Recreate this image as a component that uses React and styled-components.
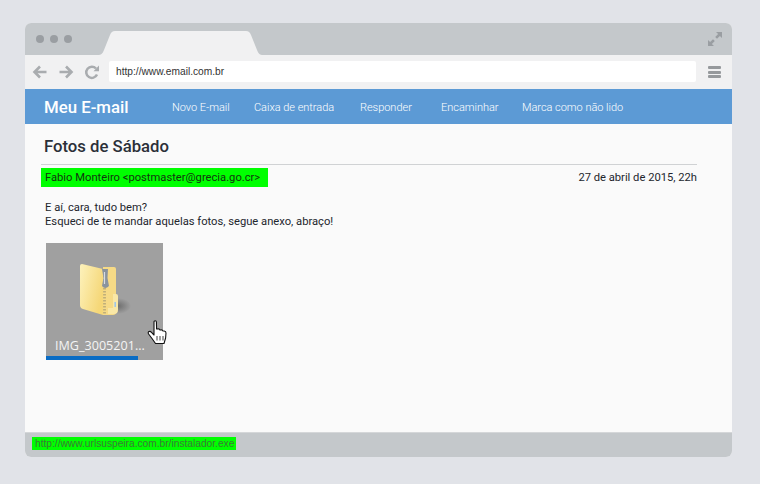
import React from "react";
import styled, { createGlobalStyle } from "styled-components";

const Global = createGlobalStyle`
  html, body { margin: 0; padding: 0; background: #e1e3e8; }
  body { width: 760px; height: 484px; overflow: hidden; font-family: Roboto, sans-serif; }
`;
const Page = styled.div`
  width: 760px; height: 484px; box-sizing: border-box; padding: 23px 28px 27px 25px;
  display: flex;
`;
const Browser = styled.div`
  flex: 1; display: flex; flex-direction: column; border-radius: 6px; overflow: hidden; background: #fafafa;
`;
const TitleBar = styled.div`
  height: 32px; flex: none; background: #c4c8cb; display: flex; align-items: flex-end;
  padding-left: 11px; padding-right: 10px; box-sizing: border-box;
`;
const Dots = styled.div`
  display: flex; gap: 6px; align-self: center; width: 62px;
`;
const Dot = styled.span`
  width: 8px; height: 8px; border-radius: 50%; background: #9a9ea2;
`;
const TabShape = styled.svg`
  width: 165px; height: 24px; display: block; flex: none;
`;
const Spacer = styled.div`flex: 1;`;
const Expand = styled.svg`
  width: 14px; height: 14px; align-self: center; flex: none;
`;
const Toolbar = styled.div`
  height: 34px; flex: none; background: #f1f1f2; display: flex; align-items: center; box-sizing: border-box;
  padding: 0 11px 0 7px;
`;
const NavIcon = styled.svg`
  width: 16px; height: 16px; flex: none; margin-right: ${p => p.$gap}px;
`;
const Url = styled.div`
  flex: 1; height: 21px; background: #fff; border-radius: 2px; display: flex; align-items: center;
  padding-left: 7px; font-family: "Liberation Sans", Arial, sans-serif; font-size: 10.2px; color: #333; margin-right: 12px;
  margin-top: -1px;
`;
const Menu = styled.div`
  width: 13px; display: flex; flex-direction: column; gap: 1.5px; flex: none;
`;
const MenuBar = styled.span`
  height: 3px; background: #96999c; border-radius: 1px;
`;
const Nav = styled.nav`
  height: 35px; flex: none; background: #5c9ad5; display: flex; align-items: center; box-sizing: border-box;
  padding-left: 19px; color: #fff;
`;
const Brand = styled.div`
  font-size: 16.8px; font-weight: 500; width: 128px; flex: none;
`;
const NavLink = styled.a`
  font-size: 11px; font-weight: 300; letter-spacing: -0.03px; color: #fff; flex: none; width: ${p => p.$w}px;
  padding-top: 1px;
`;
const Content = styled.main`
  flex: 1; box-sizing: border-box; padding: 12px 35px 0 16px; display: flex; flex-direction: column; min-height: 0;
`;
const Subject = styled.h1`
  margin: 0 0 7px 3px; font-size: 16.7px; line-height: 21px; font-weight: 500; color: #2b2f38;
`;
const Meta = styled.div`
  border-top: 1px solid #d0d2d4; display: flex; justify-content: space-between; align-items: center;
  padding-top: 3px; font-size: 11.2px; color: #23262d;
`;
const Sender = styled.span`
  background: #0f0; padding: 0 8px 0 4px; height: 19px; line-height: 19px; color: #14340f;
`;
const Body = styled.p`
  margin: 14px 0 0 4px; font-size: 11.2px; line-height: 14px; color: #23262d;
`;
const Attachment = styled.div`
  margin: 14px 0 0 5px; width: 117px; height: 117px; background: #a0a0a0; position: relative; flex: none;
`;
const Folder = styled.svg`
  position: absolute; left: 32px; top: 21px; width: 54px; height: 54px;
`;
const FileName = styled.div`
  position: absolute; left: 9px; top: 95px; font-family: "Open Sans", sans-serif; font-size: 12.6px; line-height: 15px;
  color: #f4f4f4; white-space: nowrap;
`;
const Progress = styled.div`
  position: absolute; left: 0; bottom: 0; height: 4px; background: #0a6cc4;
`;
const Hand = styled.svg`
  position: absolute; left: 101px; top: 77px; width: 22px; height: 25px;
`;
const Footer = styled.footer`
  height: 25px; flex: none; background: #c4c8cb; border-top: 1px solid #d5d7d9; box-sizing: border-box;
  display: flex; align-items: flex-start; padding: 4px 0 0 7px;
`;
const Status = styled.span`
  background: #0f0; color: #3c7a36; font-family: "Liberation Sans", Arial, sans-serif; font-size: 10.2px;
  line-height: 13px; height: 13px; padding: 0 2px 0 3px;
`;

const navItems = [
  ["Novo E-mail", 82],
  ["Caixa de entrada", 106],
  ["Responder", 81],
  ["Encaminhar", 81],
  ["Marca como não lido", 120],
];

export default function App() {
  return (
    <Page>
      <Global />
      <Browser>
        <TitleBar>
          <Dots><Dot /><Dot /><Dot /></Dots>
          <TabShape viewBox="0 0 165 24">
            <path d="M0 24 C3 24 4.5 23 6 19 L12 4 C13 1.5 14.5 0 17 0 L148 0 C150.5 0 152 1.5 153 4 L159 19 C160.5 23 162 24 165 24 Z" fill="#f1f1f2" />
          </TabShape>
          <Spacer />
          <Expand viewBox="0 0 14 14">
            <path d="M8 0 H14 V6 L11.9 3.9 L9 6.8 L7.2 5 L10.1 2.1 Z M0 8 L2.1 10.1 L5 7.2 L6.8 9 L3.9 11.9 L6 14 H0 Z" fill="#9a9ea2" />
          </Expand>
        </TitleBar>
        <Toolbar>
          <NavIcon $gap={10} viewBox="0 0 16 16">
            <path d="M14.5 8 H3 M8 2.5 L2.5 8 L8 13.5" fill="none" stroke="#a9acaf" strokeWidth="2.6" />
          </NavIcon>
          <NavIcon $gap={10} viewBox="0 0 16 16">
            <path d="M1.5 8 H13 M8 2.5 L13.5 8 L8 13.5" fill="none" stroke="#a9acaf" strokeWidth="2.6" />
          </NavIcon>
          <NavIcon $gap={9} viewBox="0 0 16 16">
            <path d="M13 10.5 A5.6 5.6 0 1 1 12 4.5" fill="none" stroke="#a9acaf" strokeWidth="2.5" />
            <path d="M9.5 7.2 H15 V1.6 Z" fill="#a9acaf" />
          </NavIcon>
          <Url>http://www.email.com.br</Url>
          <Menu><MenuBar /><MenuBar /><MenuBar /></Menu>
        </Toolbar>
        <Nav>
          <Brand>Meu E-mail</Brand>
          {navItems.map(([t, w]) => <NavLink key={t} $w={w}>{t}</NavLink>)}
        </Nav>
        <Content>
          <Subject>Fotos de Sábado</Subject>
          <Meta>
            <Sender>Fabio Monteiro &lt;postmaster@grecia.go.cr&gt;</Sender>
            <span>27 de abril de 2015, 22h</span>
          </Meta>
          <Body>E aí, cara, tudo bem?<br />Esqueci de te mandar aquelas fotos, segue anexo, abraço!</Body>
          <Attachment>
            <Folder viewBox="0 0 54 54">
              <defs>
                <linearGradient id="fold" x1="0" y1="0" x2="1" y2="0.5">
                  <stop offset="0" stopColor="#fdf2bc" />
                  <stop offset="1" stopColor="#f5d778" />
                </linearGradient>
                <radialGradient id="shade">
                  <stop offset="0" stopColor="#6e6e6e" />
                  <stop offset="1" stopColor="#a0a0a0" />
                </radialGradient>
              </defs>
              <ellipse cx="40" cy="42" rx="13" ry="8" fill="url(#shade)" />
              <path d="M4 0 L25 5 L25 51 L5 45 Q2 44 2 41 V2 Q2 0 4 0 Z" fill="url(#fold)" />
              <path d="M25 3 H36 Q38 3 38 5 V48 Q38 51 35 51 H25 Z" fill="#f6da86" />
              <path d="M35 30 H38 Q40 30 40 32 V46 Q40 50 36 50 H30 V44 H35 Z" fill="#f9e7a6" />
              <path d="M26.5 6 V50" stroke="#bfae78" strokeWidth="2.8" strokeDasharray="1.5 1.5" />
              <path d="M24 5 H30 L29.5 14 L31 22 Q27 26 24 22 L25.5 14 Z" fill="#8a949e" />
              <path d="M26.5 8 V20" stroke="#d8dde2" strokeWidth="1.2" />
              <rect x="36.4" y="38" width="1.6" height="5" fill="#9fc6e6" />
            </Folder>
            <FileName>IMG_3005201...</FileName>
            <Progress style={{ width: `${(92 / 117) * 100}%` }} />
            <Hand viewBox="0 0 22 25">
              <path d="M7 2 Q7 0.8 8.2 0.8 Q9.4 0.8 9.4 2 L9.6 9 L11.5 8.8 Q12.6 8.8 12.8 10 L14.4 9.8 Q15.6 9.8 15.8 11 L17.2 11 Q19 11.2 19 13 L18.6 18 L17 23.5 H8.5 L5 18.5 L1.6 14 Q0.6 12.4 2 11.6 Q3.2 11 4.5 12.4 L7 15 Z" fill="#fff" stroke="#111" strokeWidth="1.1" strokeLinejoin="round" />
              <path d="M10 16 V20.5 M13 16 V20.5 M16 16 V20.5" stroke="#111" strokeWidth="0.8" />
            </Hand>
          </Attachment>
        </Content>
        <Footer>
          <Status>http://www.urlsuspeira.com.br/instalador.exe</Status>
        </Footer>
      </Browser>
    </Page>
  );
}
